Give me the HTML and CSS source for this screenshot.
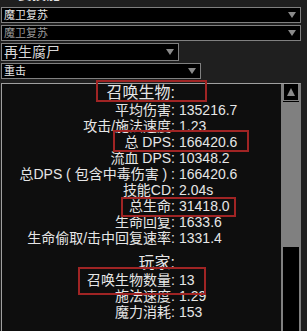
FILE: index.html
```html
<!DOCTYPE html>
<html lang="zh">
<head>
    <meta charset="UTF-8">
    <title>召唤生物</title>
    <link rel="stylesheet" href="styles.css">
</head>
<body>
    <div class="top-label">主要技能:</div>

    <div class="select select-wide">
        <span>魔卫复苏</span>
        <span class="arrow"></span>
    </div>
    <div class="select select-wide disabled">
        <span>魔卫复苏</span>
        <span class="arrow"></span>
    </div>
    <div class="select select-mid big">
        <span>再生腐尸</span>
        <span class="arrow"></span>
    </div>
    <div class="select select-short">
        <span>重击</span>
        <span class="arrow"></span>
    </div>

    <div class="panel">
        <div class="stats">
            <div class="row title"><span class="label">召唤生物:</span><span class="value"></span></div>
            <div class="row"><span class="label">平均伤害:</span><span class="value">135216.7</span></div>
            <div class="row"><span class="label">攻击/施法速度:</span><span class="value">1.23</span></div>
            <div class="row"><span class="label">总 DPS:</span><span class="value">166420.6</span></div>
            <div class="row"><span class="label">流血 DPS:</span><span class="value">10348.2</span></div>
            <div class="row"><span class="label">总DPS ( 包含中毒伤害 ) :</span><span class="value">166420.6</span></div>
            <div class="row"><span class="label">技能CD:</span><span class="value">2.04s</span></div>
            <div class="row"><span class="label">总生命:</span><span class="value">31418.0</span></div>
            <div class="row"><span class="label">生命回复:</span><span class="value">1633.6</span></div>
            <div class="row"><span class="label">生命偷取/击中回复速率:</span><span class="value">1331.4</span></div>

            <div class="row title spaced"><span class="label">玩家:</span><span class="value"></span></div>
            <div class="row"><span class="label">召唤生物数量:</span><span class="value">13</span></div>
            <div class="row"><span class="label">施法速度:</span><span class="value">1.29</span></div>
            <div class="row"><span class="label">魔力消耗:</span><span class="value">153</span></div>

            <!-- highlight boxes drawn over the stats -->
            <div class="mark" style="left: 94px; top: -4px; width: 111px; height: 22px;"></div>
            <div class="mark" style="left: 111px; top: 46px; width: 136px; height: 22px;"></div>
            <div class="mark" style="left: 119px; top: 113px; width: 115px; height: 20px;"></div>
            <div class="mark" style="left: 76px; top: 183px; width: 128px; height: 28px;"></div>
        </div>
        <div class="scrollbar">
            <div class="scroll-up"><span class="arrow-up"></span></div>
            <div class="scroll-thumb"></div>
        </div>
    </div>
</body>
</html>
```

FILE: styles.css
```css
body {
    margin: 0;
    padding: 0 0 0 1px;
    background-color: #1f1f1f;
    color: #e6e6e6;
    font-family: "Liberation Sans", "Noto Sans CJK SC", sans-serif;
    overflow: hidden;
}
.top-label {
    margin-top: -14px;
    height: 19px;
    line-height: 16px;
    font-size: 14px;
    padding-left: 3px;
    color: #e6e6e6;
}
.select {
    box-sizing: border-box;
    height: 16px;
    margin-top: 2px;
    border: 1px solid #808080;
    background-color: #000;
    display: flex;
    align-items: center;
    justify-content: space-between;
    padding: 0 4px 0 2px;
    font-size: 11px;
    line-height: 14px;
    color: #e6e6e6;
}
.select-wide {
    width: 300px;
}
.select-mid {
    width: 178px;
}
.select-short {
    width: 200px;
}
.select.big {
    height: 18px;
    font-size: 14px;
    line-height: 16px;
    color: #d8d8d8;
}
.select.disabled {
    color: #9a9a9a;
}
.arrow {
    width: 0;
    height: 0;
    border-left: 4px solid transparent;
    border-right: 4px solid transparent;
    border-top: 6px solid #8a8a8a;
}
.panel {
    box-sizing: border-box;
    width: 300px;
    height: 270px;
    margin-top: 4px;
    border: 1px solid #a0a0a0;
    border-right-color: #808080;
    background-color: #0e0e0e;
    display: flex;
}
.stats {
    position: relative;
    flex: 1;
}
.row {
    display: grid;
    grid-template-columns: 173px auto;
    font-size: 14px;
    line-height: 16px;
    white-space: nowrap;
}
.row.title {
    font-size: 16px;
    line-height: 18px;
}
.row.spaced {
    margin-top: 8px;
}
.label {
    text-align: right;
}
.value {
    padding-left: 4px;
}
.mark {
    position: absolute;
    box-sizing: border-box;
    border: 2px solid #a02424;
}
.scrollbar {
    width: 16px;
    border-left: 2px solid #808080;
    border-right: 1px solid #808080;
    background-color: #000;
    display: flex;
    flex-direction: column;
}
.scroll-up {
    box-sizing: border-box;
    height: 17px;
    border: 1px solid #808080;
    border-top: none;
    background-color: #000;
    display: flex;
    align-items: center;
    justify-content: center;
}
.arrow-up {
    width: 0;
    height: 0;
    border-left: 4px solid transparent;
    border-right: 4px solid transparent;
    border-bottom: 8px solid #8a8a8a;
}
.scroll-thumb {
    height: 145px;
    margin-top: 1px;
    background-color: #808080;
}
```
